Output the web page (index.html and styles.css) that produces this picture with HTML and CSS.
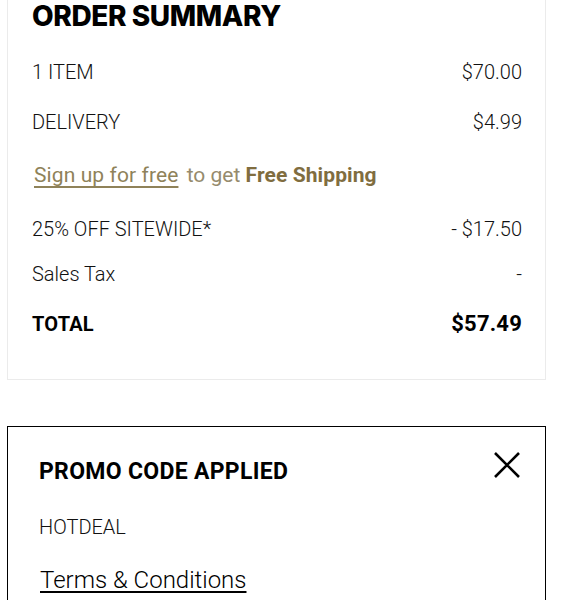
FILE: index.html
```html
<!DOCTYPE html>
<html>
<head>
<meta charset="utf-8">
<link rel="stylesheet" href="styles.css">
</head>
<body>
<div class="page">
  <section class="summary">
    <h2 class="summary-title">ORDER SUMMARY</h2>
    <div class="row r-item"><span>1 ITEM</span><span>$70.00</span></div>
    <div class="row r-delivery"><span>DELIVERY</span><span>$4.99</span></div>
    <div class="row r-signup"><span class="signup"><a class="signup-link" href="#">Sign up for free</a> to get <b>Free Shipping</b></span></div>
    <div class="row r-discount"><span>25% OFF SITEWIDE*</span><span>- $17.50</span></div>
    <div class="row r-tax"><span class="tax">Sales Tax</span><span>-</span></div>
    <div class="row r-total"><span>TOTAL</span><span class="total-val">$57.49</span></div>
  </section>
  <section class="promo">
    <div class="promo-head">
      <h3 class="promo-title">PROMO CODE APPLIED</h3>
      <button class="close" aria-label="Remove">
        <svg width="26" height="26" viewBox="0 0 26 26"><path d="M1 1 L25 25 M25 1 L1 25" stroke="#000" stroke-width="2.6" fill="none"/></svg>
      </button>
    </div>
    <div class="promo-code">HOTDEAL</div>
    <a class="terms" href="#">Terms &amp; Conditions</a>
  </section>
</div>
</body>
</html>
```
FILE: styles.css
```css
html, body { margin: 0; padding: 0; background: #fff; }
body { font-family: "Roboto", "Liberation Sans", sans-serif; color: #1a1a1a; }
.page { padding: 0 19px 0 7px; margin-top: -20px; }
.summary {
  border: 1px solid #ebebeb;
  padding: 0 23px 43px 24px;
}
.summary-title {
  margin: 0;
  padding-top: 20px;
  font-family: "Inter", "Roboto", sans-serif;
  font-weight: 800;
  font-size: 28px;
  line-height: 30px;
  letter-spacing: -0.4px;
  color: #000;
}
.row {
  display: flex;
  justify-content: space-between;
  font-size: 20px;
  line-height: 24px;
  font-weight: 300;
  color: #111;
}
.r-item { margin-top: 29px; }
.r-delivery { margin-top: 26px; }
.r-signup { margin-top: 29px; padding-left: 2px; font-size: 21px; font-weight: 400; }
.r-discount { margin-top: 30px; }
.r-tax { margin-top: 21px; }
.r-total { margin-top: 26px; font-weight: 700; color: #000; letter-spacing: 0.2px; }
.total-val { font-size: 22px; }
.signup { color: #968b6d; }
.signup-link { color: #8f8259; text-decoration: underline; text-decoration-thickness: 1.5px; text-underline-offset: 4px; margin-right: 3px; letter-spacing: 0.1px; }
.signup b { color: #806d3f; letter-spacing: 0.1px; }
.promo {
  margin-top: 46px;
  border: 1px solid #000;
  padding: 25px 25px 0 31px;
  height: 200px;
}
.promo-head { display: flex; justify-content: space-between; align-items: flex-start; }
.promo-title {
  margin: 7px 0 0 0;
  font-size: 23px;
  line-height: 26px;
  font-weight: 700;
  letter-spacing: 0.3px;
  color: #000;
}
.close { border: 0; background: none; padding: 0; margin: 0; width: 26px; height: 26px; cursor: pointer; }
.close svg { display: block; }
.promo-code { margin-top: 30px; font-size: 20px; line-height: 24px; font-weight: 300; color: #111; }
.terms {
  display: inline-block;
  margin-top: 27px;
  margin-left: 1px;
  font-size: 24px;
  line-height: 28px;
  font-weight: 300;
  color: #000;
  text-decoration: underline;
  text-decoration-thickness: 2px;
  text-underline-offset: 3px;
}
```
